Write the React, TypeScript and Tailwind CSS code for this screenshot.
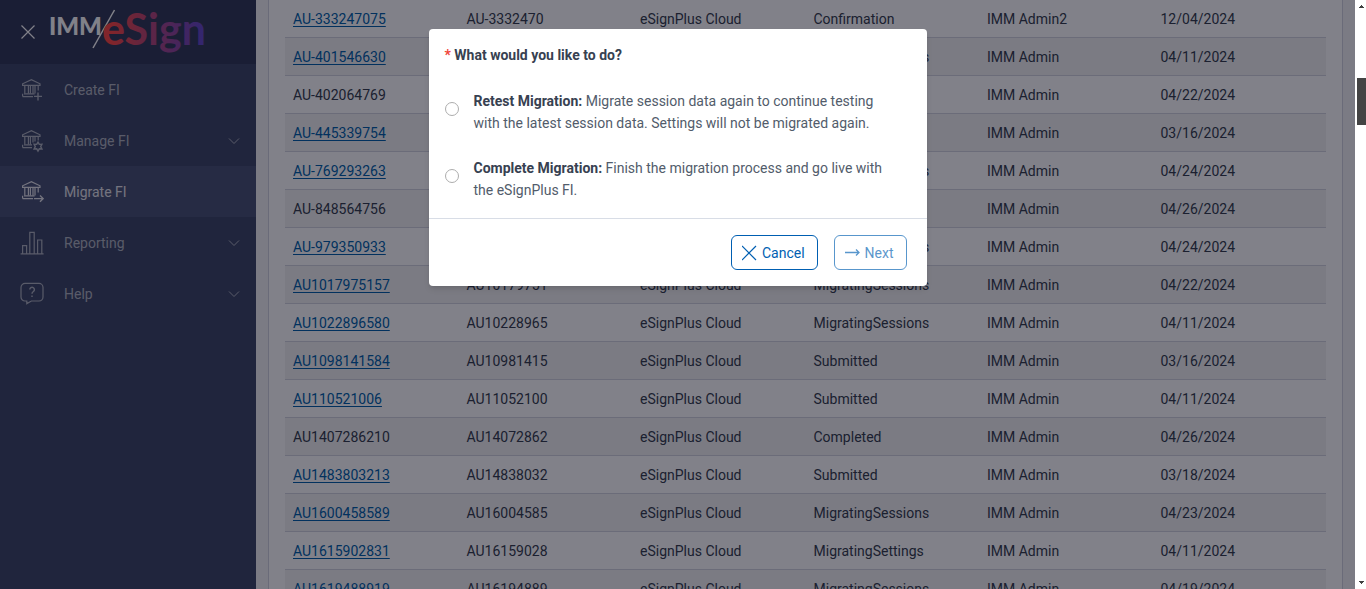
import { useState } from "react";
import type { ReactNode } from "react";

type Row = {
  id: string;
  code: string;
  status: string;
  owner?: string;
  date: string;
  link?: boolean;
};

const rows: Row[] = [
  { id: "AU-333247075", code: "AU-3332470", status: "Confirmation", owner: "IMM Admin2", date: "12/04/2024", link: true },
  { id: "AU-401546630", code: "AU-4015466", status: "MigratingSessions", date: "04/11/2024", link: true },
  { id: "AU-402064769", code: "AU-4020647", status: "Completed", date: "04/22/2024" },
  { id: "AU-445339754", code: "AU-4453397", status: "Submitted", date: "03/16/2024", link: true },
  { id: "AU-769293263", code: "AU-7692932", status: "MigratingSessions", date: "04/24/2024", link: true },
  { id: "AU-848564756", code: "AU-8485647", status: "Completed", date: "04/26/2024" },
  { id: "AU-979350933", code: "AU-9793509", status: "MigratingSessions", date: "04/24/2024", link: true },
  { id: "AU1017975157", code: "AU10179751", status: "MigratingSessions", date: "04/22/2024", link: true },
  { id: "AU1022896580", code: "AU10228965", status: "MigratingSessions", date: "04/11/2024", link: true },
  { id: "AU1098141584", code: "AU10981415", status: "Submitted", date: "03/16/2024", link: true },
  { id: "AU110521006", code: "AU11052100", status: "Submitted", date: "04/11/2024", link: true },
  { id: "AU1407286210", code: "AU14072862", status: "Completed", date: "04/26/2024" },
  { id: "AU1483803213", code: "AU14838032", status: "Submitted", date: "03/18/2024", link: true },
  { id: "AU1600458589", code: "AU16004585", status: "MigratingSessions", date: "04/23/2024", link: true },
  { id: "AU1615902831", code: "AU16159028", status: "MigratingSettings", date: "04/11/2024", link: true },
  { id: "AU1619488919", code: "AU16194889", status: "MigratingSessions", date: "04/19/2024", link: true }
];

function Icon({ children }: { children: ReactNode }) {
  return (
    <svg viewBox="0 0 24 24" className="h-6 w-6 shrink-0" fill="none" stroke="currentColor" strokeWidth="1.2" aria-hidden>
      {children}
    </svg>
  );
}

function Bank() {
  return (
    <>
      <path d="M2.6 7.4V5.8L11.4 1.6l8.6 4.2v1.6z" />
      <path d="M4.8 7.6v8M8.4 7.6v8M10.4 7.6v8M13 7.6v8M15 7.6v8M18.2 7.6v5" />
      <path d="M4 15.8h10.6M2.6 18.6h10.4M2.6 15.8v2.8" />
    </>
  );
}

const navItems = [
  {
    label: "Create FI",
    icon: (
      <Icon>
        <Bank />
        <path d="M18 14.4v8M14 18.4h8" strokeWidth="1.4" />
      </Icon>
    )
  },
  {
    label: "Manage FI",
    expandable: true,
    icon: (
      <Icon>
        <path d="M2.6 7.4V5.8L11.4 1.6l8.6 4.2v1.6z" />
        <path d="M4.8 7.6v8M8.4 7.6v8M10.4 7.6v8M13 7.6v6M15 7.6v5M18.2 7.6v4" />
        <path d="M4 15.8h8M2.6 18.6h9.4M2.6 15.8v2.8" />
        <path d="M18 13.2l1.3 2.2 2.6-.1-1.2 2.3 1.2 2.3-2.6-.1L18 22l-1.3-2.2-2.6.1 1.2-2.3-1.2-2.3 2.6.1z" strokeWidth="1.4" />
      </Icon>
    )
  },
  {
    label: "Migrate FI",
    active: true,
    icon: (
      <Icon>
        <Bank />
        <path d="M14 18.6h9M20 15.4l3.2 3.2-3.2 3.2" strokeWidth="1.4" />
      </Icon>
    )
  },
  {
    label: "Reporting",
    expandable: true,
    icon: (
      <Icon>
        <path d="M.6 22.8h23M2.6 22.6v-8h4v8M9.8 22.6V1.4h4.4v21.2M17.6 22.6V9h4.2v13.6" />
      </Icon>
    )
  },
  {
    label: "Help",
    expandable: true,
    icon: (
      <Icon>
        <path d="M5 1.4h14a4 4 0 0 1 4 4V15a4 4 0 0 1-4 4h-7.6L6.8 21.6V19H5a4 4 0 0 1-4-4V5.4a4 4 0 0 1 4-4z" />
        <path d="M9.8 7.6a2.3 2.3 0 1 1 3.6 1.9c-.9.6-1.4 1-1.4 2.2M12 13.6V15" strokeWidth="1.4" />
      </Icon>
    )
  }
];

function Logo() {
  return (
    <svg viewBox="0 0 168 56" className="h-14 w-[168px] overflow-visible" role="img" aria-label="IMM eSign">
      <defs>
        <linearGradient id="brand" gradientUnits="userSpaceOnUse" x1="54" y1="0" x2="156" y2="0">
          <stop offset="0.1" stopColor="#ff4743" />
          <stop offset="0.35" stopColor="#cc4664" />
          <stop offset="0.65" stopColor="#9c4694" />
          <stop offset="1" stopColor="#6048cc" />
        </linearGradient>
      </defs>
      <text x="1" y="31" fontFamily="Lato" fontWeight="900" fontSize="24" fill="#fff">
        IMM
      </text>
      <path d="M66.5 6L45 44" stroke="#fff" strokeWidth="1.5" />
      <text x="54" y="41" fontFamily="Lato" fontWeight="700" fontSize="43" fill="url(#brand)">
        eSign
      </text>
    </svg>
  );
}

function Sidebar() {
  return (
    <aside className="flex w-64 shrink-0 flex-col bg-[#3d4766]">
      <div className="flex h-16 items-center gap-3 bg-[#313956] pl-5">
        <button type="button" aria-label="Close menu" className="text-white">
          <svg viewBox="0 0 16 16" className="h-4 w-4" fill="none" stroke="currentColor" strokeWidth="1.2" aria-hidden>
            <path d="M1.5 1.5l13 13M14.5 1.5l-13 13" />
          </svg>
        </button>
        <Logo />
      </div>
      <nav>
        {navItems.map((item) => (
          <a
            key={item.label}
            href="#"
            className={
              item.active
                ? "flex h-[51px] items-center gap-5 bg-[#495374] pl-5 pr-4 text-[#e4e4ea]"
                : "flex h-[51px] items-center gap-5 pl-5 pr-4 text-[#afb3bf]"
            }
          >
            {item.icon}
            <span className="flex-1">{item.label}</span>
            {item.expandable && (
              <svg viewBox="0 0 12 12" className="h-3 w-3" fill="none" stroke="currentColor" aria-hidden>
                <path d="M1 3.5l5 5 5-5" />
              </svg>
            )}
          </a>
        ))}
      </nav>
    </aside>
  );
}

function FiTable() {
  return (
    <main className="min-w-0 flex-1 bg-[#f3f3f5] px-3">
      <div className="border-x border-[#d0d3de] bg-white px-4">
        <table className="w-full table-fixed border-separate border-spacing-0 text-left text-[#343c4c]">
          <tbody>
            {rows.map((row) => (
              <tr key={row.id} className="h-[38px] even:bg-[#f3f3f3] *:border-b *:border-[#d2d4de] *:px-2">
                <td>
                  {row.link ? (
                    <a href="#" className="text-[#005fa8] underline underline-offset-2">
                      {row.id}
                    </a>
                  ) : (
                    row.id
                  )}
                </td>
                <td>{row.code}</td>
                <td>eSignPlus Cloud</td>
                <td>{row.status}</td>
                <td>{row.owner ?? "IMM Admin"}</td>
                <td>{row.date}</td>
              </tr>
            ))}
          </tbody>
        </table>
      </div>
    </main>
  );
}

const options = [
  {
    value: "retest",
    title: "Retest Migration:",
    text: "Migrate session data again to continue testing with the latest session data. Settings will not be migrated again."
  },
  {
    value: "complete",
    title: "Complete Migration:",
    text: "Finish the migration process and go live with the eSignPlus FI."
  }
];

function MigrationDialog() {
  const [choice, setChoice] = useState("");

  return (
    <div role="dialog" aria-modal="true" className="w-[498px] rounded bg-white text-[#525c6b] shadow-md">
      <fieldset className="px-4 pb-[17px] pt-[15px] leading-[22px]">
        <legend className="contents font-bold text-[#374151]">
          <span className="text-[#f04438]">*</span> What would you like to do?
        </legend>
        <div className="mt-6 flex flex-col gap-[23px]">
          {options.map((option) => (
            <label key={option.value} className="flex items-start gap-[15px] pr-5">
              <input
                type="radio"
                name="migration"
                value={option.value}
                checked={choice === option.value}
                onChange={() => setChoice(option.value)}
                className="mt-3 h-3.5 w-3.5 shrink-0 appearance-none rounded-full border border-[#adadad] bg-white checked:border-4 checked:border-[#005fb2]"
              />
              <span>
                <b className="font-bold text-[#374151]">{option.title}</b> {option.text}
              </span>
            </label>
          ))}
        </div>
      </fieldset>
      <div className="flex justify-end gap-4 border-t border-[#d8dde6] px-5 py-4 text-[#005fb2]">
        <button type="button" className="flex h-[35px] items-center gap-1 rounded-md border border-current pl-2.5 pr-3">
          <svg viewBox="0 0 16 16" className="h-4 w-4" fill="none" stroke="currentColor" strokeWidth="1.2" aria-hidden>
            <path d="M0 1l14 14M14 1L0 15" />
          </svg>
          Cancel
        </button>
        <button
          type="button"
          disabled={!choice}
          className="flex h-[35px] items-center gap-1 rounded-md border border-current pl-2.5 pr-3 disabled:opacity-65"
        >
          <svg viewBox="0 0 16 16" className="h-4 w-4" fill="none" stroke="currentColor" strokeWidth="1.3" aria-hidden>
            <path d="M-.5 7.5h14M11 4.5l3 3-3 3" />
          </svg>
          Next
        </button>
      </div>
    </div>
  );
}

function Scrollbar() {
  return (
    <div className="flex w-[11px] shrink-0 flex-col bg-white pl-0.5" aria-hidden>
      <svg viewBox="0 0 9 9" className="h-[9px] w-[9px]" fill="#404040">
        <path d="M4 5h1v1h1v1h1v1H2V7h1V6h1z" />
      </svg>
      <div className="mt-[69px] h-[47px] bg-[#444]" />
      <svg viewBox="0 0 9 9" className="mt-auto h-[9px] w-[9px]" fill="#404040">
        <path d="M2 1h5v1H6v1H5v1H4V3H3V2H2z" />
      </svg>
    </div>
  );
}

export default function App() {
  return (
    <div className="flex h-screen overflow-hidden font-['Roboto',sans-serif] text-sm">
      <div className="relative flex min-w-0 flex-1 overflow-hidden">
        <Sidebar />
        <FiTable />
        <div className="absolute inset-0 flex items-start justify-center bg-[#030314]/50 pt-[29px]">
          <MigrationDialog />
        </div>
      </div>
      <Scrollbar />
    </div>
  );
}
